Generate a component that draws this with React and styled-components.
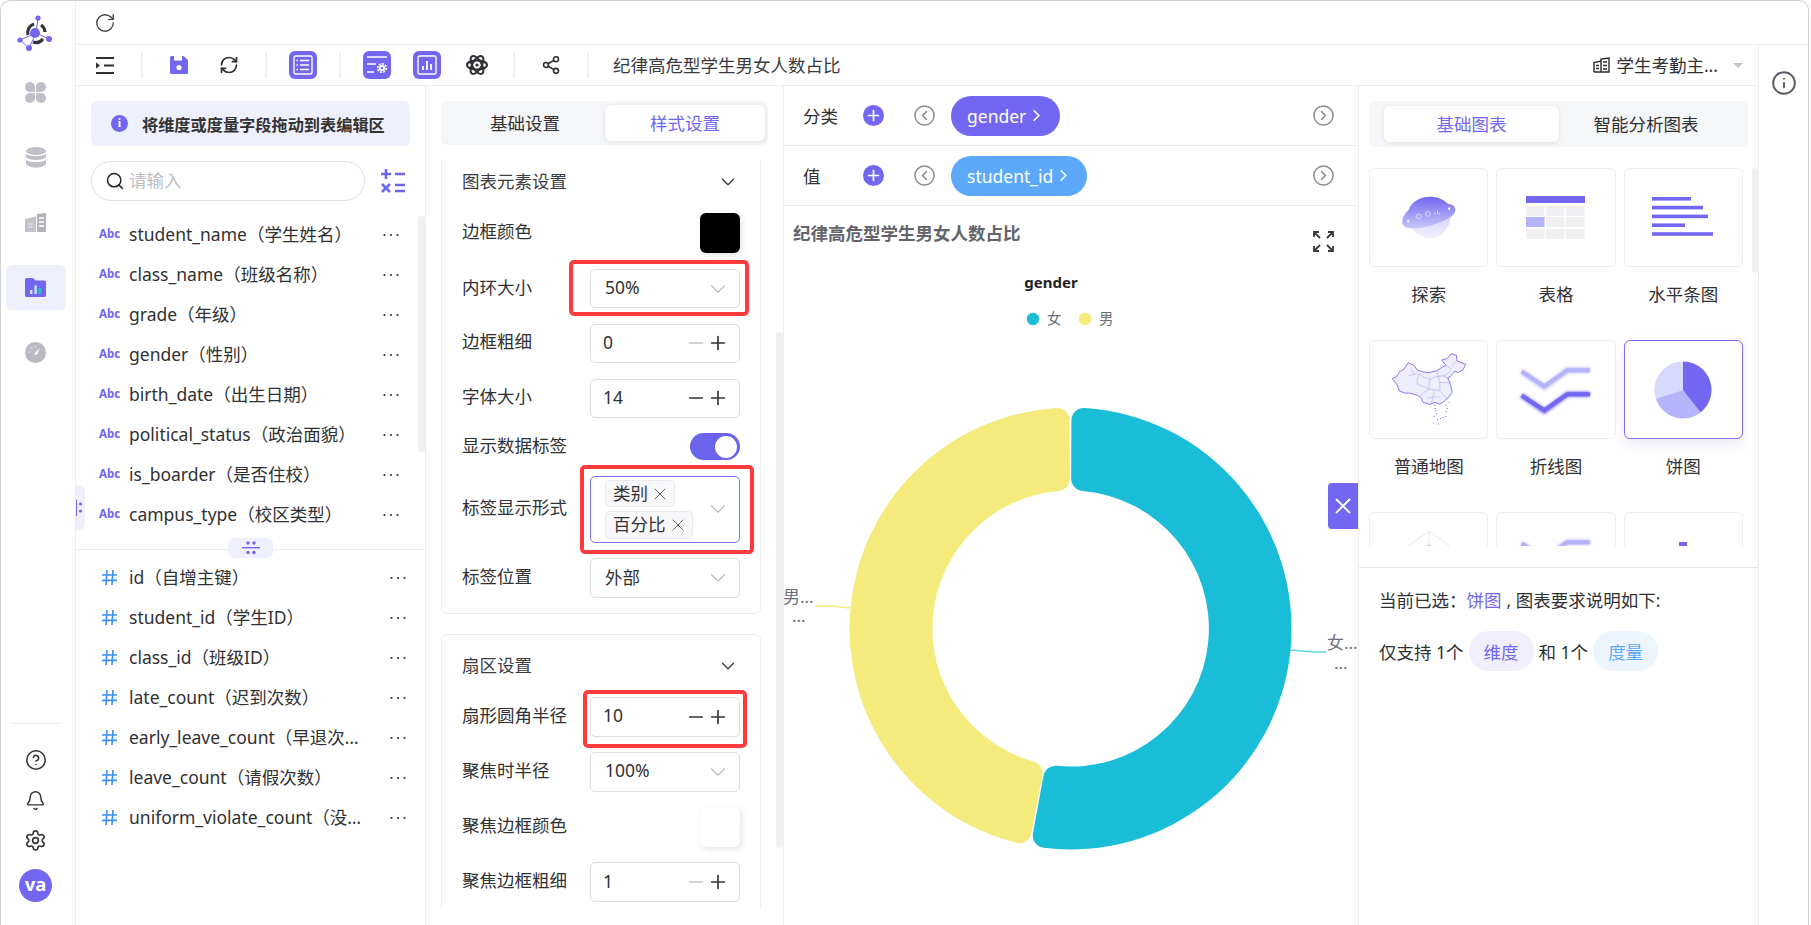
import React from "react";
import styled, { createGlobalStyle } from "styled-components";
import { RotateCw, RefreshCw, Share2, Search, CircleHelp, Bell, Settings, Info, ChevronDown, ChevronRight, CircleChevronLeft, CircleChevronRight, Plus, Minus, X } from "lucide-react";

const PURPLE = "#7366f0";
const BLUE = "#5ca9fb";
const FONT = `"Noto Sans", "Noto Sans CJK SC", sans-serif`;

const Global = createGlobalStyle`
  html, body { margin: 0; padding: 0; background: #fff; }
  body { font-family: ${FONT}; font-size: 17.5px; color: #303133; }
  * { box-sizing: border-box; }
`;

const Frame = styled.div`
  width: 1809px; height: 925px; display: flex; overflow: hidden; background: #fff;
  border: 1px solid #d2d2d4; border-bottom: none; border-radius: 10px 10px 0 0;
`;

/* ---------- sidebar ---------- */
const Sidebar = styled.aside`
  width: 75px; flex: none; display: flex; flex-direction: column; align-items: center;
  border-right: 1px solid #eeeef0; padding: 0 5px 23.5px 0;
`;
const LogoBox = styled.div`height: 63px; width: 100%; display: flex; align-items: center; justify-content: center; flex: none;`;
const NavList = styled.nav`display: flex; flex-direction: column; gap: 20px; padding-top: 6px; align-items: center;`;
const NavItem = styled.div`
  width: 60px; height: 45px; border-radius: 6px; display: flex; align-items: center; justify-content: center;
  background: ${p => (p.$active ? "#eff0fd" : "transparent")};
`;
const SideFoot = styled.div`margin-top: auto; width: 100%; display: flex; flex-direction: column; align-items: center;`;
const SideRule = styled.div`width: 50px; height: 1px; background: #ececee; margin-bottom: 24px;`;
const SideTool = styled.div`height: 24px; margin-bottom: 16px; display: flex; align-items: center; color: #333;`;
const Avatar = styled.div`
  width: 33px; height: 33px; border-radius: 50%; background: ${PURPLE}; color: #fff; font-weight: 700; font-size: 18.5px;
  display: flex; align-items: center; justify-content: center; line-height: 1; margin-top: 0.5px; padding-bottom: 2px;
`;

/* ---------- main ---------- */
const Main = styled.div`flex: 1; min-width: 0; display: flex; flex-direction: column;`;
const TopBar = styled.div`height: 44px; flex: none; border-bottom: 1px solid #eeeef0; display: flex; align-items: center; padding: 0 0 0 18px; color: #444;`;
const Lower = styled.div`flex: 1; min-height: 0; display: flex;`;
const Workspace = styled.div`width: 1683px; flex: none; display: flex; flex-direction: column; border-right: 1px solid #eeeef0;`;
const InfoRail = styled.div`flex: 1; display: flex; justify-content: center; padding-top: 25px; color: #5c5c66;`;

const Toolbar = styled.div`
  height: 41px; flex: none; display: flex; align-items: center; gap: 22px; padding: 0 15px 0 15px; border-bottom: 1px solid #eeeef0;
`;
const ToolItem = styled.div`width: 28px; height: 28px; flex: none; display: flex; align-items: center; justify-content: center; color: #2f2f33;`;
const ToolBtn = styled(ToolItem)`background: ${PURPLE}; border-radius: 6px; color: #fff;`;
const ToolSep = styled.div`width: 2px; height: 25px; flex: none; background: #f0f0f2;`;
const ToolTitle = styled.div`margin-left: 2px; white-space: nowrap; color: #3a3a3f; padding-bottom: 2px;`;
const SubjectPick = styled.div`margin-left: auto; display: flex; align-items: center; gap: 6px; white-space: nowrap; color: #303133;`;
const SubjectText = styled.span`padding-bottom: 2px;`;
const Caret = styled.span`width: 0; height: 0; border-left: 5px solid transparent; border-right: 5px solid transparent; border-top: 5px solid #c4c6cc; margin-left: 9px;`;

const Content = styled.div`flex: 1; min-height: 0; display: flex;`;

/* ---------- left field panel ---------- */
const LeftPanel = styled.section`width: 350px; flex: none; position: relative; border-right: 1px solid #eeeef0; padding-top: 15px;`;
const Banner = styled.div`
  margin-left: 15px; width: 319px; height: 45px; border-radius: 6px; background: #eff0fd; display: flex; align-items: center;
  padding-left: 20px; gap: 14px; font-weight: 700; white-space: nowrap; color: #333; font-size: 16.2px;
`;
const InfoDot = styled.span`
  width: 17px; height: 17px; border-radius: 50%; background: ${PURPLE}; color: #fff; display: flex; align-items: center; justify-content: center;
  font: 700 12px "Liberation Serif", serif; flex: none;
`;
const SearchRow = styled.div`margin: 15px 0 14px 15px; display: flex; align-items: center; gap: 15px;`;
const SearchBox = styled.label`
  width: 274px; height: 40px; border: 1px solid #dfdfe2; border-radius: 20px; display: flex; align-items: center; gap: 4px; padding-left: 13px; color: #222;
`;
const SearchInput = styled.input`
  border: none; outline: none; background: none; width: 200px; font: 17.5px ${FONT}; padding: 0 0 2px;
  &::placeholder { color: #bdbdc2; opacity: 1; }
`;
const FieldList = styled.div`padding: 0 ${p => p.$right}px 0 23px; position: relative;`;
const FieldRow = styled.div`height: 40px; display: flex; align-items: center; white-space: nowrap;`;
const AbcTag = styled.span`width: 30px; flex: none; font-size: 11.5px; font-weight: 700; color: ${PURPLE}; line-height: 1; padding-bottom: 2px;`;
const HashSlot = styled.span`width: 30px; flex: none; display: flex; padding: 0 0 2px 3px;`;
const FieldName = styled.span`width: 238px; overflow: hidden; text-overflow: ellipsis; color: #303133; flex: none; padding-bottom: 3px;`;
const Dots = styled.svg`margin-left: auto; flex: none;`;
const ListThumb = styled.div`position: absolute; right: 0; top: 1px; width: 7px; height: 236px; border-radius: 4px; background: #f0f0f3;`;
const SplitRule = styled.div`height: 1px; background: #eeeef0; margin: 14px 0 8px; position: relative;`;
const SplitPill = styled.div`
  position: absolute; left: 152px; top: -11px; width: 45px; height: 20px; border-radius: 6px; background: #eff0fd;
  display: flex; align-items: center; justify-content: center;
`;
const SideHandle = styled.div`
  position: absolute; left: 0; top: 399px; width: 9px; height: 45px; background: #eff0fd; border-radius: 0 6px 6px 0;
  display: flex; align-items: center;
`;

/* ---------- settings panel ---------- */
const SettingsPanel = styled.section`width: 358px; flex: none; position: relative; border-right: 1px solid #eeeef0; padding-top: 15px;`;
const TabBar = styled.div`background: #f5f6f8; border-radius: 6px; display: grid; grid-template-columns: 1fr 1fr; align-items: stretch;`;
const SettingTabs = styled(TabBar)`margin-left: 15px; width: 327px; height: 44px; padding: 4px 3px 4px 4px;`;
const ChartTabs = styled(TabBar)`height: 46px; padding: 5px 15px; grid-template-columns: 175px 1fr;`;
const Tab = styled.div`
  display: flex; align-items: center; justify-content: center; border-radius: 6px; padding-bottom: 1px;
  color: ${p => (p.$on ? PURPLE : "#303133")}; background: ${p => (p.$on ? "#fff" : "transparent")};
  box-shadow: ${p => (p.$on ? "0 1px 4px rgba(30,30,60,.10)" : "none")};
`;
const ScrollArea = styled.div`height: 749px; margin-top: 15px; overflow: hidden; padding-left: 15px;`;
const ScrollInner = styled.div`margin-top: -10px; width: 320px; display: flex; flex-direction: column; gap: 20px;`;
const Card = styled.div`border: 1px solid #eeeef0; border-radius: 6px; padding: 0 20px 15px 20px; display: flex; flex-direction: column; gap: 15.4px;`;
const CardHead = styled.div`height: 47px; margin-bottom: 0; display: flex; align-items: flex-end; justify-content: space-between; color: #3c3c42; padding-right: 1px;`;
const CardHeadText = styled.span`line-height: 30px; height: 32px;`;
const CardHeadIcon = styled.span`display: flex; height: 32px; align-items: center;`;
const SetRow = styled.div`display: flex; align-items: center; justify-content: space-between; white-space: nowrap; color: #303133;`;
const SetLabel = styled.span`line-height: 22px; padding-bottom: 4px;`;
const Control = styled.div`position: relative; width: 150px; flex: none;`;
const SelectBox = styled.div`
  height: 39.5px; border: 1px solid #dcdde0; border-radius: 5px; display: flex; align-items: center; justify-content: space-between;
  padding: 0 8px 0 14px;
`;
const BoxValue = styled.span`padding-bottom: 3px;`;
const NumberBox = styled(SelectBox)`padding: 0 10px 0 12px;`;
const Steps = styled.div`display: flex; align-items: center; color: #333;`;
const Swatch = styled.div`
  width: 40px; height: 40px; border-radius: 6px; background: ${p => p.$color}; box-shadow: 2px 2px 6px rgba(0,0,0,.1);
`;
const Toggle = styled.div`
  width: 50px; height: 27px; border-radius: 14px; background: #6c63ed; display: flex; align-items: center; justify-content: flex-end; padding-right: 3px;
`;
const Knob = styled.div`width: 22px; height: 22px; border-radius: 50%; background: #fff;`;
const MultiBox = styled.div`
  height: 67px; border: 1px solid #7b74ee; border-radius: 5px; display: flex; align-items: center; justify-content: space-between; padding: 0 8px 0 14px;
`;
const TagStack = styled.div`display: flex; flex-direction: column; align-items: flex-start; gap: 4px;`;
const Tag = styled.div`
  height: 27.5px; border: 1px solid #e9e9ee; border-radius: 5px; background: #f8f8fb; display: flex; align-items: center; gap: 2px; padding: 0 4px 0 7px; color: #333;
`;
const TagText = styled.span`padding-bottom: 2px; line-height: 22px;`;
const Annotation = styled.div`
  position: absolute; top: ${p => p.$t}px; bottom: ${p => p.$b}px; left: ${p => p.$l}px; right: ${p => p.$r}px;
  border: 4.5px solid #ff3b3d; border-radius: 5px; pointer-events: none;
`;
const SettingsThumb = styled.div`position: absolute; right: 0; top: 246px; width: 7px; height: 516px; border-radius: 4px; background: #f0f0f3;`;

/* ---------- chart panel ---------- */
const ChartPanel = styled.section`width: 574px; flex: none; position: relative; display: flex; flex-direction: column;`;
const ShelfRow = styled.div`height: 60px; flex: none; border-bottom: 1px solid #eeeef0; display: flex; align-items: center; padding: 0 23px 0 19px;`;
const ShelfLabel = styled.span`width: 60px; flex: none; color: #303133;`;
const AddBtn = styled.span`width: 21px; height: 21px; border-radius: 50%; background: ${PURPLE}; color: #fff; display: flex; align-items: center; justify-content: center; flex: none; margin-right: 29px;`;
const ShelfPill = styled.div`
  height: 40px; border-radius: 20px; background: ${p => p.$color}; color: #fff; display: flex; align-items: center; gap: 1px; padding: 0 14px 0 16px; margin-left: 15px; white-space: nowrap;
`;
const ArrowEnd = styled.span`margin-left: auto; display: flex; color: #8c8c94;`;
const ArrowStart = styled.span`display: flex; color: #8c8c94;`;
const ChartHead = styled.div`height: 56px; flex: none; display: flex; justify-content: space-between; padding: 15px 24px 0 9px;`;
const ChartTitle = styled.div`font-weight: 700; color: #64646b; white-space: nowrap; line-height: 24px;`;
const ExpandIcon = styled.span`display: flex; padding-top: 10px; height: 20px;`;
const ChartSvg = styled.svg`display: block; overflow: visible;`;
const ChartText = styled.text`font-family: ${FONT}; font-size: ${p => p.$s}px; font-weight: ${p => p.$w || 400}; fill: ${p => p.$c};`;
const CloseTab = styled.div`
  position: absolute; right: 0; top: 397px; width: 30px; height: 46px; background: ${PURPLE}; border-radius: 4px 0 0 4px;
  display: flex; align-items: center; justify-content: center; color: #fff;
`;

/* ---------- chart types panel ---------- */
const TypePanel = styled.section`flex: 1; position: relative; border-left: 1px solid #eeeef0; display: flex; flex-direction: column;`;
const TypeTop = styled.div`padding: 15px 10px 0 10px;`;
const GridClip = styled.div`height: 378px; margin-top: 21px; overflow: hidden; position: relative;`;
const TypeGrid = styled.div`display: grid; grid-template-columns: repeat(3, 119.3px); column-gap: 8px; row-gap: 31px;`;
const TypeCell = styled.div`display: flex; flex-direction: column; align-items: center; gap: 14px;`;
const TypeCard = styled.div`
  width: 100%; height: 99px; border-radius: 6px; display: flex; align-items: center; justify-content: center; background: #fff;
  border: 1px solid ${p => (p.$on ? "#7a70f0" : "#eeeef0")};
  box-shadow: ${p => (p.$on ? "0 5px 14px rgba(90,80,200,.12)" : "none")};
`;
const TypeName = styled.div`height: 28px; line-height: 26px; color: #333;`;
const TypeThumb = styled.div`position: absolute; right: 0; top: 82px; width: 6px; height: 105px; background: #f0f0f3; border-radius: 3px;`;
const HintBox = styled.div`margin-top: 21px; border-top: 1px solid #e8e8ea; padding: 14px 0 0 20px;`;
const HintLine = styled.div`height: 34px; display: flex; align-items: center; white-space: nowrap; color: #303133;`;
const HintLink = styled.span`color: ${PURPLE}; margin: 0 5px 0 0;`;
const HintPills = styled(HintLine)`height: 40px; margin-top: 15px; gap: 5px;`;
const HintPill = styled.span`
  width: 65px; height: 40px; border-radius: 20px; display: flex; align-items: center; justify-content: center;
  background: ${p => p.$bg}; color: ${p => p.$fg};
`;
const GlowSvg = styled.svg`overflow: visible;`;

/* ---------- drawings ---------- */
const Logo = () => (
  <svg width="38" height="38" viewBox="0 0 38 38">
    <g stroke={PURPLE} strokeWidth="1">
      <path d="M19 19 L21 4 M19 19 L3 26 M19 19 L32 25 M19 19 L12 34 M3 26 L12 34" fill="none" />
    </g>
    <path d="M11 21 A9 9 0 0 1 17 10" fill="none" stroke="#33343a" strokeWidth="3.2" />
    <path d="M16 28 A9 9 0 0 0 26 25" fill="none" stroke="#33343a" strokeWidth="3.2" />
    <path d="M24 11 A9 9 0 0 1 28 18" fill="none" stroke="#33343a" strokeWidth="3.2" />
    <circle cx="18" cy="19" r="5" fill={PURPLE} />
    <g fill={PURPLE}>
      <circle cx="21" cy="4" r="2.6" />
      <circle cx="3" cy="26" r="2.6" />
      <circle cx="32" cy="25" r="3" />
      <circle cx="12" cy="34" r="3" />
    </g>
  </svg>
);
const GREY = "#bfbfc7";
const PetalIcon = () => (
  <svg width="21" height="21" viewBox="0 0 21 21" fill={GREY}>
    <path d="M5 0 a5 5 0 0 1 5 5 v4 a1 1 0 0 1 -1 1 h-4 a5 5 0 0 1 0 -10z" />
    <path d="M16 0 a5 5 0 0 1 0 10 h-4 a1 1 0 0 1 -1 -1 v-4 a5 5 0 0 1 5 -5z" />
    <path d="M5 21 a5 5 0 0 1 0 -10 h4 a1 1 0 0 1 1 1 v4 a5 5 0 0 1 -5 5z" />
    <path d="M16 21 a5 5 0 0 0 0 -10 h-4 a1 1 0 0 0 -1 1 v4 a5 5 0 0 0 5 5z" />
  </svg>
);
const DbIcon = () => (
  <svg width="20" height="21" viewBox="0 0 20 21" fill={GREY}>
    <ellipse cx="10" cy="4" rx="10" ry="4" />
    <path d="M0 6.5 C2 10 18 10 20 6.5 V10 C18 14 2 14 0 10z" />
    <path d="M0 12.5 C2 16 18 16 20 12.5 V16.5 C18 22 2 22 0 16.5z" />
  </svg>
);
const BlocksIcon = () => (
  <svg width="21" height="19" viewBox="0 0 21 19">
    <path d="M0 6 L11 3.5 V19 H0z" fill="#c2c2c9" />
    <path d="M12 1 L21 0 V19 H12z" fill="#b4b4bc" />
    <path d="M3 11h5M3 14h5" stroke="#dedee2" strokeWidth="1.4" />
    <path d="M14 5h5M14 9h5M14 13h5" stroke="#fff" strokeWidth="1.6" />
  </svg>
);
const FolderChartIcon = () => (
  <svg width="21" height="19" viewBox="0 0 21 19">
    <path d="M0 1.5 A1.5 1.5 0 0 1 1.5 0 H8 L10.5 2.5 H19.5 A1.5 1.5 0 0 1 21 4 V17.5 A1.5 1.5 0 0 1 19.5 19 H1.5 A1.5 1.5 0 0 1 0 17.5z" fill={PURPLE} />
    <rect x="5" y="12" width="2.4" height="4" fill="#d9d8fc" />
    <rect x="9.4" y="7.5" width="2.4" height="8.5" fill="#bfe9f5" />
    <rect x="13.6" y="10" width="2.4" height="6" fill="#2bc2d6" />
  </svg>
);
const GaugeIcon = () => (
  <svg width="21" height="21" viewBox="0 0 21 21">
    <circle cx="10.5" cy="10.5" r="10.5" fill="#b9b9c1" />
    <path d="M9 12 L15 6 L11.5 13z" fill="#fff" />
    <g fill="#dfdfe3"><circle cx="4.5" cy="10" r="1" /><circle cx="6.5" cy="6" r="1" /><circle cx="10.5" cy="4.5" r="1" /></g>
  </svg>
);
const IndentIcon = () => (
  <svg width="18" height="17" viewBox="0 0 18 17" fill="#2f2f33">
    <rect x="0" y="0" width="18" height="2" />
    <rect x="8" y="7.5" width="10" height="2" />
    <rect x="0" y="15" width="18" height="2" />
    <path d="M0 5.5 L4 8.5 L0 11.5z" />
  </svg>
);
const SaveIcon = () => (
  <svg width="18" height="18" viewBox="0 0 18 18">
    <path d="M1.5 0 H13.5 L18 4 V16.5 A1.5 1.5 0 0 1 16.5 18 H1.5 A1.5 1.5 0 0 1 0 16.5 V1.5 A1.5 1.5 0 0 1 1.5 0z" fill={PURPLE} />
    <rect x="4" y="0" width="8" height="4.5" fill="#fff" />
    <circle cx="9" cy="11.5" r="2.6" fill="#fff" />
  </svg>
);
const ListBtnIcon = () => (
  <svg width="20" height="20" viewBox="0 0 20 20" fill="none" stroke="#fff" strokeWidth="1.4">
    <rect x="1" y="1" width="18" height="18" rx="1.5" />
    <path d="M7 5.5h9M7 10h9M7 14.5h9M3.5 5.5h1.5M3.5 10h1.5M3.5 14.5h1.5" />
  </svg>
);
const FilterBtnIcon = () => (
  <svg width="22" height="20" viewBox="0 0 22 20" fill="none" stroke="#fff" strokeWidth="1.6">
    <path d="M1 2h20M1 9h9M1 17h7" />
    <circle cx="16" cy="13" r="3" fill="#fff" stroke="none" />
    <circle cx="16" cy="13" r="4.2" strokeDasharray="2 1.2" strokeWidth="1.8" />
    <circle cx="16" cy="13" r="1.2" fill={PURPLE} stroke="none" />
  </svg>
);
const BarsBtnIcon = () => (
  <svg width="20" height="20" viewBox="0 0 20 20" fill="none" stroke="#fff" strokeWidth="1.4">
    <rect x="1" y="1" width="18" height="18" rx="1.5" />
    <path d="M6 15V11M10 15V6M14 15V9" strokeWidth="1.8" />
  </svg>
);
const AtomIcon = () => (
  <svg width="22" height="22" viewBox="0 0 22 22" fill="none" stroke="#2f2f33" strokeWidth="2">
    <ellipse cx="11" cy="11" rx="10" ry="4.6" />
    <ellipse cx="11" cy="11" rx="10" ry="4.6" transform="rotate(60 11 11)" />
    <ellipse cx="11" cy="11" rx="10" ry="4.6" transform="rotate(120 11 11)" />
    <circle cx="11" cy="11" r="1.6" fill="#2f2f33" stroke="none" />
  </svg>
);
const BuildingIcon = () => (
  <svg width="17" height="16" viewBox="0 0 17 16" fill="none" stroke="#2a2a2e" strokeWidth="1.4">
    <path d="M1 15V5.5L8 4V15M8 15V2L16 1V15H1" />
    <path d="M3 8.5h3M3 11.5h3M10 5h4M10 8.5h4M10 12h4" />
  </svg>
);
const DotsIcon = () => (
  <Dots width="16" height="4" viewBox="0 0 16 4" fill="#2f2f33">
    <circle cx="1.5" cy="2" r="1.1" /><circle cx="8" cy="2" r="1.1" /><circle cx="14.5" cy="2" r="1.1" />
  </Dots>
);
const HashIcon = () => (
  <svg width="15" height="15" viewBox="0 0 15 15" fill="none" stroke="#3f94f4" strokeWidth="1.7">
    <path d="M0 5h15M0 10.3h15M5 0L4 15M11 0L10 15" />
  </svg>
);
const CalcIcon = () => (
  <svg width="26" height="26" viewBox="0 0 26 26" fill="none" stroke="#6f66ef" strokeWidth="2.6">
    <path d="M1 6h10M6 1v10M15 6h10" />
    <path d="M2 16l8 8M10 16l-8 8M15 17h10M15 23h10" />
  </svg>
);
const HandleGrip = () => (
  <svg width="8" height="16" viewBox="0 0 8 16" fill={PURPLE}>
    <rect x="0" y="0" width="1" height="16" />
    <circle cx="4.5" cy="4" r="1.6" /><circle cx="4.5" cy="11" r="1.6" />
  </svg>
);
const SplitGrip = () => (
  <svg width="18" height="14" viewBox="0 0 18 14" fill={PURPLE}>
    <rect x="0" y="6" width="18" height="1.4" />
    <circle cx="6" cy="2" r="1.7" /><circle cx="12" cy="2" r="1.7" />
    <circle cx="6" cy="11.5" r="1.7" /><circle cx="12" cy="11.5" r="1.7" />
  </svg>
);
const ExpandSvg = () => (
  <svg width="21" height="21" viewBox="0 0 21 21" fill="none" stroke="#3a3a40" strokeWidth="1.8">
    <path d="M1 6V1h5M1 1l6 6M15 1h5v5M20 1l-6 6M1 15v5h5M1 20l6-6M20 15v5h-5M20 20l-6-6" />
  </svg>
);

const rad = d => (d * Math.PI) / 180;
function sectorPath(cx, cy, R, r, a0d, a1d, rc) {
  const a0 = rad(a0d), a1 = rad(a1d);
  const pt = (q, a) => `${(cx + q * Math.sin(a)).toFixed(2)} ${(cy - q * Math.cos(a)).toFixed(2)}`;
  const dO = Math.asin(rc / (R - rc)), dI = Math.asin(rc / (r + rc));
  const eO = Math.sqrt((R - rc) ** 2 - rc ** 2), eI = Math.sqrt((r + rc) ** 2 - rc ** 2);
  const large = a1 - a0 > Math.PI ? 1 : 0;
  return [
    `M${pt(eO, a0)}`,
    `A${rc} ${rc} 0 0 1 ${pt(R, a0 + dO)}`,
    `A${R} ${R} 0 ${large} 1 ${pt(R, a1 - dO)}`,
    `A${rc} ${rc} 0 0 1 ${pt(eO, a1)}`,
    `L${pt(eI, a1)}`,
    `A${rc} ${rc} 0 0 1 ${pt(r, a1 - dI)}`,
    `A${r} ${r} 0 ${large} 0 ${pt(r, a0 + dI)}`,
    `A${rc} ${rc} 0 0 1 ${pt(eI, a0)}`,
    "Z",
  ].join(" ");
}
const CYAN = "#19bdd8", YELLOW = "#f4eb7c";

const DonutChart = () => (
  <ChartSvg width="573" height="663" viewBox="0 0 573 663">
    <ChartText x="267" y="26" textAnchor="middle" $s={15} $w={700} $c="#222">gender</ChartText>
    <circle cx="249" cy="57" r="6.2" fill={CYAN} />
    <ChartText x="263" y="62" $s={14.5} $c="#6e7079">女</ChartText>
    <circle cx="301" cy="57" r="6.2" fill={YELLOW} />
    <ChartText x="315" y="62" $s={14.5} $c="#6e7079">男</ChartText>
    <path d={sectorPath(286.5, 366.5, 221, 138, 0.25, 190.4, 12.5)} fill={CYAN} />
    <path d={sectorPath(286.5, 366.5, 221, 138, 190.8, 359.75, 12.5)} fill={YELLOW} />
    <polyline points="31,344 48,344 66,346" fill="none" stroke={YELLOW} strokeWidth="1.4" />
    <polyline points="506,388 530,390 542,390" fill="none" stroke="#62d4e6" strokeWidth="1.4" />
    <ChartText x="-1" y="341" $s={17} $c="#6e7079">男...</ChartText>
    <ChartText x="8" y="360" $s={17} $c="#6e7079">...</ChartText>
    <ChartText x="543" y="387" $s={17} $c="#6e7079">女...</ChartText>
    <ChartText x="550" y="407" $s={17} $c="#6e7079">...</ChartText>
  </ChartSvg>
);

const PlanetThumb = () => (
  <svg width="57" height="45" viewBox="180 585 170 135">
    <defs>
      <linearGradient id="planetA" x1="0" y1="0" x2="0" y2="1">
        <stop offset="0" stopColor={PURPLE} />
        <stop offset="1" stopColor="#c9c7fa" />
      </linearGradient>
      <linearGradient id="planetB" x1="0" y1="0" x2="0" y2="1">
        <stop offset="0" stopColor="#b9b6fa" />
        <stop offset="1" stopColor="#f3f2ff" />
      </linearGradient>
    </defs>
    <circle cx="268" cy="652" r="62" fill="url(#planetB)" />
    <path d="M205 630 C215 602 245 590 268 590 C292 590 312 598 324 612 C345 612 352 632 338 646 C310 670 235 692 200 683 C178 676 184 648 205 630z" fill="url(#planetA)" />
    <g fill="none" stroke="#dcdafd" strokeWidth="3">
      <circle cx="236" cy="649" r="7" /><circle cx="263" cy="642" r="7" />
      <path d="M284 645v-8M292 642v-11M298 644v-7" />
    </g>
    <path d="M322 624 l6 8 l3 -10z M204 656 l-4 9 l8 4z" fill="#fff" />
  </svg>
);
const TableThumb = () => (
  <svg width="59" height="43" viewBox="0 0 59 43">
    <rect x="0" y="0" width="59" height="7" fill={PURPLE} />
    {[10, 21, 33].map(y => [0, 20, 40].map(x => (
      <rect key={`${x}-${y}`} x={x} y={y} width="18.5" height="10" fill={x === 0 && y === 21 ? "#b5b4fb" : "#f0f0f3"} />
    )))}
  </svg>
);
const BarThumb = () => (
  <svg width="62" height="41" viewBox="0 0 62 41" fill={PURPLE}>
    {[39, 51, 56, 33, 61].map((w, i) => <rect key={i} x="0" y={i * 8.8} width={w} height="3.6" />)}
  </svg>
);
const MapThumb = () => (
  <svg width="78" height="78" viewBox="150 95 235 235">
    <path d="M157 178 L170 172 L178 158 L192 150 L205 130 L222 138 L232 152 L250 158 L268 160 L290 155 L305 145 L318 138 L306 122 L322 118 L335 103 L350 108 L352 125 L378 135 L370 152 L355 160 L345 156 L332 172 L324 176 L332 195 L337 220 L325 236 L314 246 L300 255 L285 250 L270 256 L250 250 L244 236 L232 228 L210 222 L195 222 L178 215 L172 198z" fill="#eeeefd" stroke={PURPLE} strokeWidth="2.6" strokeLinejoin="round" />
    <g fill="none" stroke="#a6a0f7" strokeWidth="1.5">
      <path d="M205 170 L222 165 L240 165 L254 175 L270 180 L268 195 L268 210 L252 220 L240 232" />
      <path d="M270 180 L290 172 L310 170 L328 178 M268 210 L285 212 L300 215 L312 228 L322 240 M290 155 L296 172 L300 190 L300 215" />
      <path d="M240 165 L232 180 L232 195 L250 202 L268 210 M300 190 L322 190 L332 195 M335 140 L350 125 M318 138 L335 150 L322 165 L310 170" />
      <path d="M284 212 L280 232 L275 252 M300 235 L285 232 L262 238 M222 165 L215 150" />
    </g>
    <g fill={PURPLE}>
      {[[285, 258], [286, 268], [288, 275], [283, 292], [296, 315], [303, 298], [318, 292], [322, 268], [328, 250], [318, 258], [280, 312], [293, 302], [310, 295], [320, 278], [290, 284]].map(([x, y], i) => (
        <circle key={i} cx={x} cy={y} r="1.7" />
      ))}
    </g>
  </svg>
);
const LineThumb = ({ id }) => (
  <GlowSvg width="72" height="47" viewBox="540 140 216 140">
    <defs>
      <filter id={id} x="-20%" y="-80%" width="140%" height="260%"><feGaussianBlur stdDeviation="5" /></filter>
    </defs>
    <polyline points="545,156 613,203 682,152 750,152" fill="none" stroke="#b5b4fb" strokeWidth="15" filter={`url(#${id})`} />
    <polyline points="545,156 613,200 682,152 750,152" fill="none" stroke="#b5b4fb" strokeWidth="12" />
    <polyline points="545,228 613,275 682,224 750,224" fill="none" stroke={PURPLE} strokeWidth="15" filter={`url(#${id})`} />
    <polyline points="545,228 613,272 682,224 750,224" fill="none" stroke={PURPLE} strokeWidth="12" />
  </GlowSvg>
);
const slice = (a0, a1, r = 28.5) => {
  const p = a => `${(30 + r * Math.sin(rad(a))).toFixed(2)} ${(30 - r * Math.cos(rad(a))).toFixed(2)}`;
  return `M30 30 L${p(a0)} A${r} ${r} 0 ${a1 - a0 > 180 ? 1 : 0} 1 ${p(a1)}z`;
};
const PieThumb = () => (
  <svg width="60" height="60" viewBox="0 0 60 60">
    <path d={slice(252, 360)} fill="#d8d9fd" />
    <path d={slice(142, 252)} fill="#b5b4fb" />
    <path d={slice(0, 142)} fill={PURPLE} />
  </svg>
);
const RadarThumb = () => (
  <svg width="66" height="66" viewBox="0 0 66 66" fill="none" stroke="#e6e6f8" strokeWidth="1">
    <path d="M33 2 L63 24 L52 60 L14 60 L3 24z" />
    <path d="M33 14 L51 28 L45 50 L21 50 L15 28z" />
    <path d="M33 2V60M3 24L52 60M63 24L14 60" />
    <path d="M33 16 L44 30 L38 44 L24 44 L20 28z" fill="#d8d9fd" stroke="#b5b4fb" />
  </svg>
);
const BarColThumb = () => (
  <svg width="62" height="40" viewBox="0 0 62 40" fill={PURPLE}>
    <rect x="27" y="0" width="8" height="40" />
    <rect x="12" y="14" width="8" height="26" fill="#b5b4fb" />
    <rect x="42" y="20" width="8" height="20" fill="#b5b4fb" />
  </svg>
);

const attrFields = ["student_name（学生姓名）", "class_name（班级名称）", "grade（年级）", "gender（性别）", "birth_date（出生日期）", "political_status（政治面貌）", "is_boarder（是否住校）", "campus_type（校区类型）"];
const numFields = ["id（自增主键）", "student_id（学生ID）", "class_id（班级ID）", "late_count（迟到次数）", "early_leave_count（早退次数）", "leave_count（请假次数）", "uniform_violate_count（没穿校服次数）"];
const chartTypes = [
  ["探索", <PlanetThumb key="a" />],
  ["表格", <TableThumb key="b" />],
  ["水平条图", <BarThumb key="c" />],
  ["普通地图", <MapThumb key="d" />],
  ["折线图", <LineThumb key="e" id="lineA" />],
  ["饼图", <PieThumb key="f" />, true],
  [null, <RadarThumb key="g" />],
  [null, <LineThumb key="h" id="lineB" />],
  [null, <BarColThumb key="i" />],
];

const Chev = () => <ChevronDown size={26} strokeWidth={1.05} color="#b8bac0" />;
const NumberField = ({ value, minusOff }) => (
  <NumberBox>
    <BoxValue>{value}</BoxValue>
    <Steps>
      <Minus size={22} strokeWidth={1.8} color={minusOff ? "#c8c8cc" : "#333"} />
      <Plus size={22} strokeWidth={1.8} />
    </Steps>
  </NumberBox>
);
const SelectField = ({ value }) => (
  <SelectBox><BoxValue>{value}</BoxValue><Chev /></SelectBox>
);

export default function App() {
  return (
    <>
      <Global />
      <Frame>
        <Sidebar>
          <LogoBox><Logo /></LogoBox>
          <NavList>
            <NavItem><PetalIcon /></NavItem>
            <NavItem><DbIcon /></NavItem>
            <NavItem><BlocksIcon /></NavItem>
            <NavItem $active><FolderChartIcon /></NavItem>
            <NavItem><GaugeIcon /></NavItem>
          </NavList>
          <SideFoot>
            <SideRule />
            <SideTool><CircleHelp size={22} strokeWidth={1.7} /></SideTool>
            <SideTool><Bell size={21} strokeWidth={1.7} /></SideTool>
            <SideTool><Settings size={23} strokeWidth={1.7} /></SideTool>
            <Avatar>va</Avatar>
          </SideFoot>
        </Sidebar>
        <Main>
          <TopBar><RotateCw size={22} strokeWidth={1.5} /></TopBar>
          <Lower>
            <Workspace>
              <Toolbar>
                <ToolItem><IndentIcon /></ToolItem>
                <ToolSep />
                <ToolItem><SaveIcon /></ToolItem>
                <ToolItem><RefreshCw size={20} strokeWidth={2} /></ToolItem>
                <ToolSep />
                <ToolBtn><ListBtnIcon /></ToolBtn>
                <ToolSep />
                <ToolBtn><FilterBtnIcon /></ToolBtn>
                <ToolBtn><BarsBtnIcon /></ToolBtn>
                <ToolItem><AtomIcon /></ToolItem>
                <ToolSep />
                <ToolItem><Share2 size={20} strokeWidth={1.9} /></ToolItem>
                <ToolSep />
                <ToolTitle>纪律高危型学生男女人数占比</ToolTitle>
                <SubjectPick>
                  <BuildingIcon />
                  <SubjectText>学生考勤主...</SubjectText>
                  <Caret />
                </SubjectPick>
              </Toolbar>
              <Content>
                <LeftPanel>
                  <Banner><InfoDot>i</InfoDot>将维度或度量字段拖动到表编辑区</Banner>
                  <SearchRow>
                    <SearchBox>
                      <Search size={20} strokeWidth={1.8} />
                      <SearchInput placeholder="请输入" />
                    </SearchBox>
                    <CalcIcon />
                  </SearchRow>
                  <FieldList $right={26}>
                    {attrFields.map(f => (
                      <FieldRow key={f}><AbcTag>Abc</AbcTag><FieldName>{f}</FieldName><DotsIcon /></FieldRow>
                    ))}
                    <ListThumb />
                  </FieldList>
                  <SplitRule><SplitPill><SplitGrip /></SplitPill></SplitRule>
                  <FieldList $right={19}>
                    {numFields.map(f => (
                      <FieldRow key={f}><HashSlot><HashIcon /></HashSlot><FieldName>{f}</FieldName><DotsIcon /></FieldRow>
                    ))}
                  </FieldList>
                  <SideHandle><HandleGrip /></SideHandle>
                </LeftPanel>

                <SettingsPanel>
                  <SettingTabs>
                    <Tab>基础设置</Tab>
                    <Tab $on>样式设置</Tab>
                  </SettingTabs>
                  <ScrollArea>
                    <ScrollInner>
                      <Card>
                        <CardHead><CardHeadText>图表元素设置</CardHeadText><CardHeadIcon><ChevronDown size={22} strokeWidth={1.5} color="#3c3c42" /></CardHeadIcon></CardHead>
                        <SetRow><SetLabel>边框颜色</SetLabel><Swatch $color="#000" /></SetRow>
                        <SetRow><SetLabel>内环大小</SetLabel>
                          <Control>
                            <SelectField value="50%" />
                            <Annotation $t={-9} $b={-8} $l={-21} $r={-9} />
                          </Control>
                        </SetRow>
                        <SetRow><SetLabel>边框粗细</SetLabel><Control><NumberField value="0" minusOff /></Control></SetRow>
                        <SetRow><SetLabel>字体大小</SetLabel><Control><NumberField value="14" /></Control></SetRow>
                        <SetRow><SetLabel>显示数据标签</SetLabel><Toggle><Knob /></Toggle></SetRow>
                        <SetRow><SetLabel>标签显示形式</SetLabel>
                          <Control>
                            <MultiBox>
                              <TagStack>
                                <Tag><TagText>类别</TagText><X size={20} strokeWidth={1.1} color="#555" /></Tag>
                                <Tag><TagText>百分比</TagText><X size={20} strokeWidth={1.1} color="#555" /></Tag>
                              </TagStack>
                              <Chev />
                            </MultiBox>
                            <Annotation $t={-11} $b={-11} $l={-10} $r={-14} />
                          </Control>
                        </SetRow>
                        <SetRow><SetLabel>标签位置</SetLabel><Control><SelectField value="外部" /></Control></SetRow>
                      </Card>
                      <Card>
                        <CardHead><CardHeadText>扇区设置</CardHeadText><CardHeadIcon><ChevronDown size={22} strokeWidth={1.5} color="#3c3c42" /></CardHeadIcon></CardHead>
                        <SetRow><SetLabel>扇形圆角半径</SetLabel>
                          <Control>
                            <NumberField value="10" />
                            <Annotation $t={-7} $b={-11} $l={-7} $r={-7} />
                          </Control>
                        </SetRow>
                        <SetRow><SetLabel>聚焦时半径</SetLabel><Control><SelectField value="100%" /></Control></SetRow>
                        <SetRow><SetLabel>聚焦边框颜色</SetLabel><Swatch $color="#fff" /></SetRow>
                        <SetRow><SetLabel>聚焦边框粗细</SetLabel><Control><NumberField value="1" minusOff /></Control></SetRow>
                      </Card>
                    </ScrollInner>
                  </ScrollArea>
                  <SettingsThumb />
                </SettingsPanel>

                <ChartPanel>
                  <ShelfRow>
                    <ShelfLabel>分类</ShelfLabel>
                    <AddBtn><Plus size={17} strokeWidth={2.4} /></AddBtn>
                    <ArrowStart><CircleChevronLeft size={23} strokeWidth={1.6} /></ArrowStart>
                    <ShelfPill $color={PURPLE}>gender<ChevronRight size={19} strokeWidth={2} /></ShelfPill>
                    <ArrowEnd><CircleChevronRight size={23} strokeWidth={1.6} /></ArrowEnd>
                  </ShelfRow>
                  <ShelfRow>
                    <ShelfLabel>值</ShelfLabel>
                    <AddBtn><Plus size={17} strokeWidth={2.4} /></AddBtn>
                    <ArrowStart><CircleChevronLeft size={23} strokeWidth={1.6} /></ArrowStart>
                    <ShelfPill $color={BLUE}>student_id<ChevronRight size={19} strokeWidth={2} /></ShelfPill>
                    <ArrowEnd><CircleChevronRight size={23} strokeWidth={1.6} /></ArrowEnd>
                  </ShelfRow>
                  <ChartHead>
                    <ChartTitle>纪律高危型学生男女人数占比</ChartTitle>
                    <ExpandIcon><ExpandSvg /></ExpandIcon>
                  </ChartHead>
                  <DonutChart />
                  <CloseTab><X size={26} strokeWidth={1.7} /></CloseTab>
                </ChartPanel>

                <TypePanel>
                  <TypeTop>
                    <ChartTabs>
                      <Tab $on>基础图表</Tab>
                      <Tab>智能分析图表</Tab>
                    </ChartTabs>
                    <GridClip>
                      <TypeGrid>
                        {chartTypes.map(([name, art, on], i) => (
                          <TypeCell key={i}>
                            <TypeCard $on={on}>{art}</TypeCard>
                            {name && <TypeName>{name}</TypeName>}
                          </TypeCell>
                        ))}
                      </TypeGrid>
                    </GridClip>
                  </TypeTop>
                  <TypeThumb />
                  <HintBox>
                    <HintLine>当前已选：<HintLink>饼图</HintLink>, 图表要求说明如下:</HintLine>
                    <HintPills>
                      仅支持 1个
                      <HintPill $bg="#f1effd" $fg={PURPLE}>维度</HintPill>
                      和 1个
                      <HintPill $bg="#edf6ff" $fg={BLUE}>度量</HintPill>
                    </HintPills>
                  </HintBox>
                </TypePanel>
              </Content>
            </Workspace>
            <InfoRail><Info size={26} strokeWidth={1.8} /></InfoRail>
          </Lower>
        </Main>
      </Frame>
    </>
  );
}
